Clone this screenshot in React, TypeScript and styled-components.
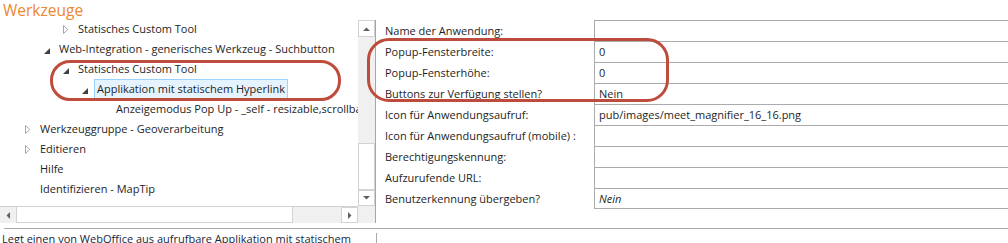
import React from "react";
import styled, { createGlobalStyle } from "styled-components";

const GlobalStyle = createGlobalStyle`
  html, body {
    margin: 0;
    padding: 0;
    background: #ffffff;
    overflow: hidden;
  }
  body {
    font-family: "Segoe UI", "Open Sans", "Noto Sans", sans-serif;
    font-size: 11px;
    color: #1e1e1e;
  }
`;

const Page = styled.div`
  position: relative;
  width: 1008px;
  height: 243px;
  overflow: hidden;
`;

const Title = styled.div`
  height: 20px;
  padding-left: 3px;
  font-size: 15.5px;
  line-height: 20px;
  color: #ee8730;
`;

const Main = styled.div`
  display: flex;
  height: 203px;
`;

const TreePane = styled.div`
  display: grid;
  grid-template-columns: 358px 17px;
  grid-template-rows: 186px 17px;
  width: 375px;
  border-right: 1px solid #a6a6a6;
  flex-shrink: 0;
`;

const TreeView = styled.div`
  overflow: hidden;
  margin-top: -1px;
`;

const TreeRow = styled.div<{ $level: number }>`
  display: flex;
  align-items: center;
  height: 20px;
  padding-left: ${(p) => 18 + p.$level * 19}px;
  white-space: nowrap;
`;

const Expander = styled.span`
  display: flex;
  align-items: center;
  width: 19px;
  height: 20px;
  padding-left: 7px;
  box-sizing: border-box;
  flex-shrink: 0;
`;

const NodeLabel = styled.span<{ $selected?: boolean }>`
  height: 18px;
  line-height: 18px;
  padding: 0 2px;
  border: 1px solid ${(p) => (p.$selected ? "#99d1ff" : "transparent")};
  background: ${(p) => (p.$selected ? "#e5f3ff" : "transparent")};
`;

const VScroll = styled.div`
  display: flex;
  flex-direction: column;
  background: #f0f0f0;
`;

const ArrowButton = styled.div<{ $plain?: boolean; $w?: number; $h?: number }>`
  display: flex;
  align-items: center;
  justify-content: center;
  width: ${(p) => (p.$w ? `${p.$w}px` : "auto")};
  height: ${(p) => (p.$h ? `${p.$h}px` : "auto")};
  box-sizing: border-box;
  border: 1px solid ${(p) => (p.$plain ? "transparent" : "#d2d2d2")};
  background: ${(p) => (p.$plain ? "transparent" : "#ffffff")};
  flex-shrink: 0;
`;

const VTrack = styled.div`
  flex: 1;
  display: flex;
  flex-direction: column;
  justify-content: flex-end;
`;

const VThumb = styled.div`
  height: 47px;
  border: 1px solid #d2d2d2;
  background: #ffffff;
  box-sizing: border-box;
`;

const HScroll = styled.div`
  display: flex;
  background: #f0f0f0;
  border-top: 1px solid #d2d2d2;
  box-sizing: border-box;
`;

const HThumb = styled.div`
  width: 277px;
  border: 1px solid #d2d2d2;
  border-top: none;
  background: #ffffff;
  box-sizing: border-box;
`;

const HTrack = styled.div`
  flex: 1;
`;

const Corner = styled.div`
  background: #f0f0f0;
`;

const PropGrid = styled.div`
  flex: 1;
  display: flex;
  flex-direction: column;
`;

const PropRow = styled.div`
  display: flex;
  height: 21px;
`;

const PropLabel = styled.div`
  width: 218px;
  padding-left: 9px;
  line-height: 21px;
  box-sizing: border-box;
  white-space: nowrap;
`;

const PropValue = styled.div<{ $italic?: boolean; $last?: boolean }>`
  flex: 1;
  padding-left: 4px;
  line-height: 20px;
  border-left: 1px solid #ababab;
  border-top: 1px solid #ababab;
  border-bottom: ${(p) => (p.$last ? "1px solid #ababab" : "none")};
  font-style: ${(p) => (p.$italic ? "italic" : "normal")};
  white-space: nowrap;
`;

const StatusRule = styled.div`
  margin: 5px 0 0 4px;
  border-top: 1px solid #ababab;
`;

const StatusRow = styled.div`
  display: flex;
  height: 40px;
`;

const StatusText = styled.div`
  width: 376px;
  padding: 2px 4px 0 2px;
  box-sizing: border-box;
  line-height: 16px;
  color: #17263b;
`;

const StatusDivider = styled.div`
  width: 1px;
  margin-top: 4px;
  background: #ababab;
`;

const Oval = styled.div<{ $r: number }>`
  position: absolute;
  box-sizing: border-box;
  border: 3px solid #bd4c3d;
  border-radius: ${(p) => p.$r}px;
  pointer-events: none;
`;

const Expanded = () => (
  <svg width="6" height="6" viewBox="0 0 6 6" style={{ marginTop: 3 }}>
    <path d="M6 0 L6 6 L0 6 Z" fill="#404040" />
  </svg>
);

const Collapsed = () => (
  <svg width="6" height="9" viewBox="0 0 6 9">
    <path d="M0.5 0.5 L4.8 4.5 L0.5 8.5 Z" fill="none" stroke="#a6a6a6" />
  </svg>
);

const Arrow = ({ dir }: { dir: "up" | "down" | "left" | "right" }) => {
  const d = {
    up: "M0 4 L3.5 0.5 L7 4 Z",
    down: "M0 0 L7 0 L3.5 3.5 Z",
    left: "M4 0 L4 7 L0.5 3.5 Z",
    right: "M0 0 L3.5 3.5 L0 7 Z",
  }[dir];
  const vertical = dir === "up" || dir === "down";
  return (
    <svg width={vertical ? 7 : 4} height={vertical ? 4 : 7} viewBox={vertical ? "0 0 7 4" : "0 0 4 7"}>
      <path d={d} fill="#606060" />
    </svg>
  );
};

type Node = {
  level: number;
  text: string;
  state?: "open" | "closed";
  selected?: boolean;
};

const nodes: Node[] = [
  { level: 2, text: "Statisches Custom Tool", state: "closed" },
  { level: 1, text: "Web-Integration - generisches Werkzeug - Suchbutton", state: "open" },
  { level: 2, text: "Statisches Custom Tool", state: "open" },
  { level: 3, text: "Applikation mit statischem Hyperlink", state: "open", selected: true },
  { level: 4, text: "Anzeigemodus Pop Up - _self - resizable,scrollbars" },
  { level: 0, text: "Werkzeuggruppe - Geoverarbeitung", state: "closed" },
  { level: 0, text: "Editieren", state: "closed" },
  { level: 0, text: "Hilfe" },
  { level: 0, text: "Identifizieren - MapTip" },
];

const props: { label: string; value: string; italic?: boolean }[] = [
  { label: "Name der Anwendung:", value: "" },
  { label: "Popup-Fensterbreite:", value: "0" },
  { label: "Popup-Fensterhöhe:", value: "0" },
  { label: "Buttons zur Verfügung stellen?", value: "Nein" },
  { label: "Icon für Anwendungsaufruf:", value: "pub/images/meet_magnifier_16_16.png" },
  { label: "Icon für Anwendungsaufruf (mobile) :", value: "" },
  { label: "Berechtigungskennung:", value: "" },
  { label: "Aufzurufende URL:", value: "" },
  { label: "Benutzerkennung übergeben?", value: "Nein", italic: true },
];

export default function App() {
  return (
    <Page>
      <GlobalStyle />
      <Title>Werkzeuge</Title>
      <Main>
        <TreePane>
          <TreeView>
            {nodes.map((n, i) => (
              <TreeRow key={i} $level={n.level}>
                <Expander>
                  {n.state === "open" && <Expanded />}
                  {n.state === "closed" && <Collapsed />}
                </Expander>
                <NodeLabel $selected={n.selected}>{n.text}</NodeLabel>
              </TreeRow>
            ))}
          </TreeView>
          <VScroll>
            <ArrowButton $h={17}>
              <Arrow dir="up" />
            </ArrowButton>
            <VTrack>
              <VThumb />
            </VTrack>
            <ArrowButton $h={16}>
              <Arrow dir="down" />
            </ArrowButton>
          </VScroll>
          <HScroll>
            <ArrowButton $plain $w={16}>
              <Arrow dir="left" />
            </ArrowButton>
            <HThumb />
            <HTrack />
            <ArrowButton $w={17}>
              <Arrow dir="right" />
            </ArrowButton>
          </HScroll>
          <Corner />
        </TreePane>
        <PropGrid>
          {props.map((p, i) => (
            <PropRow key={i}>
              <PropLabel>{p.label}</PropLabel>
              <PropValue $italic={p.italic} $last={i === props.length - 1}>
                {p.value}
              </PropValue>
            </PropRow>
          ))}
        </PropGrid>
      </Main>
      <StatusRule />
      <StatusRow>
        <StatusText>Legt einen von WebOffice aus aufrufbare Applikation mit statischem Hyperlink an.</StatusText>
        <StatusDivider />
      </StatusRow>
      <Oval $r={20} style={{ left: 50, top: 60, width: 291, height: 41 }} />
      <Oval $r={22} style={{ left: 367, top: 38, width: 302, height: 64 }} />
    </Page>
  );
}
